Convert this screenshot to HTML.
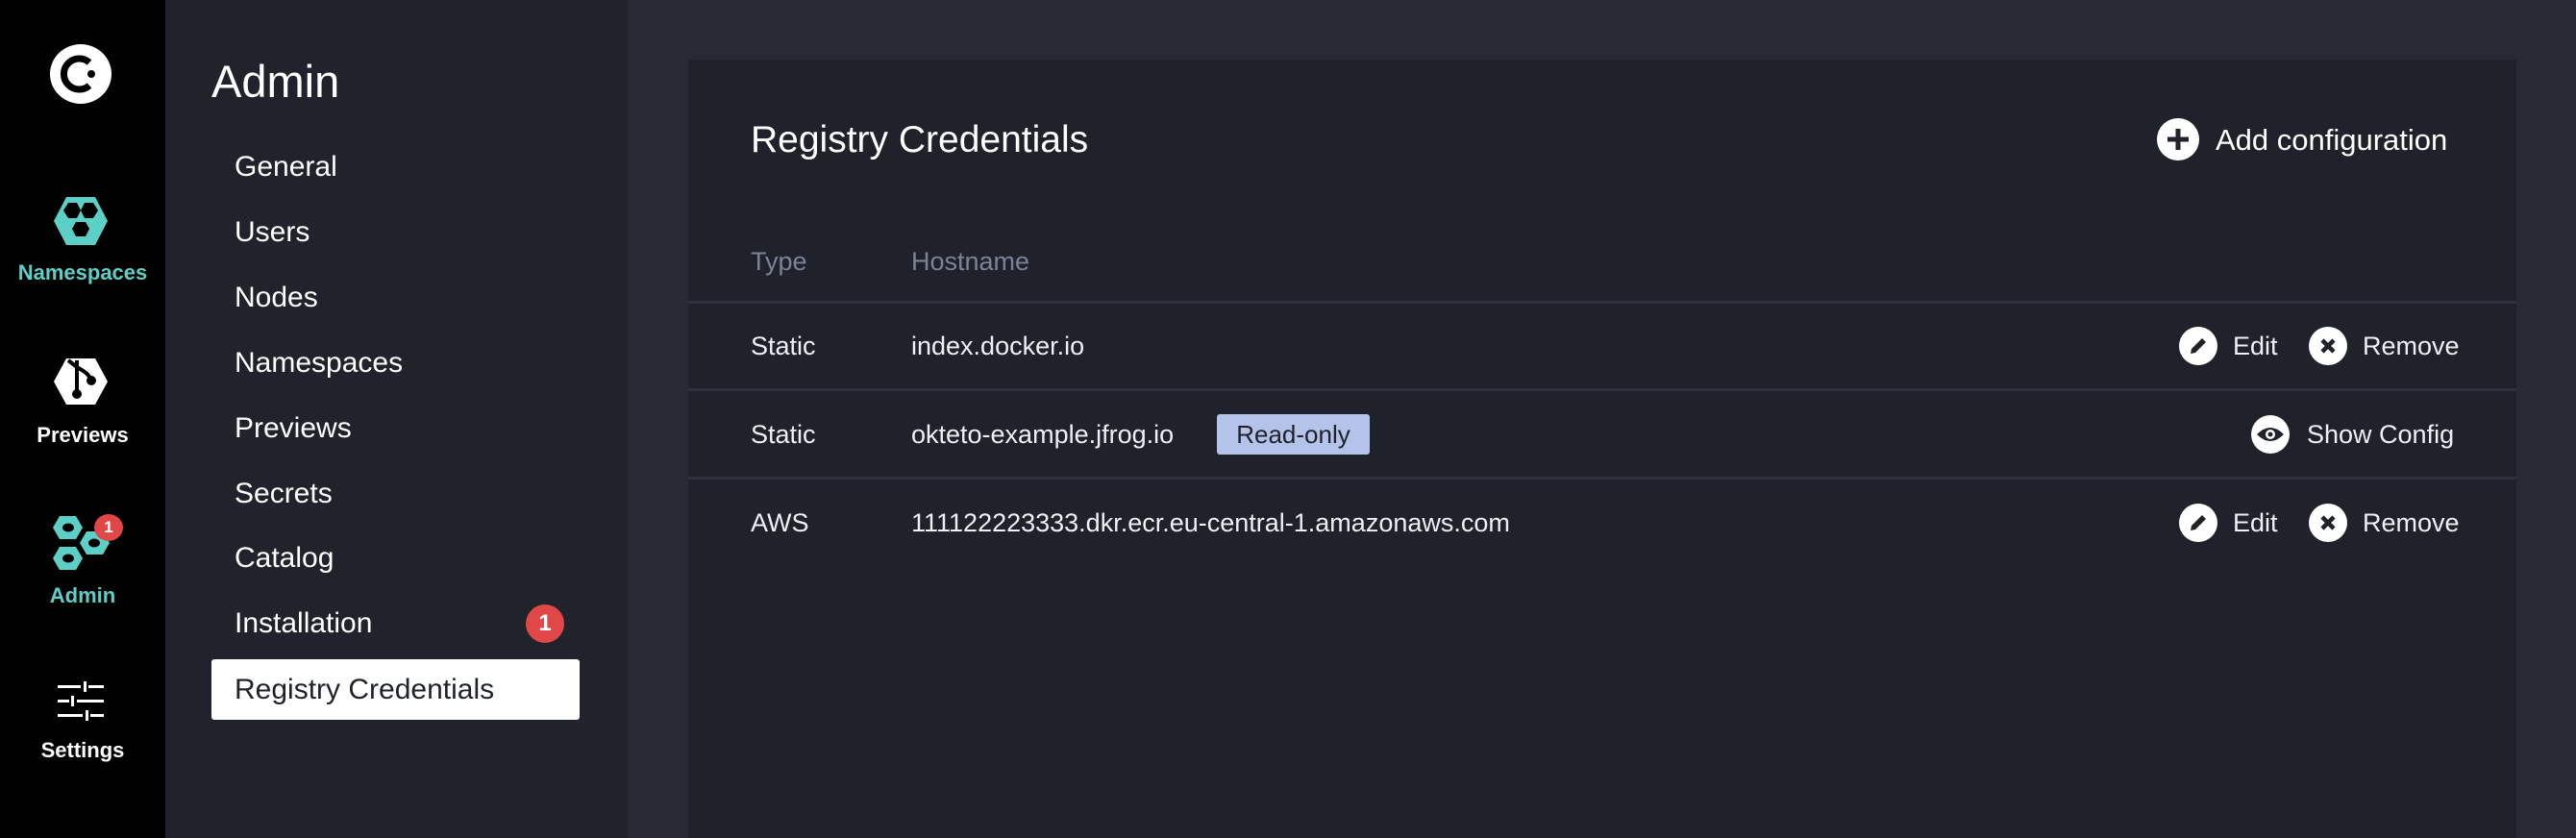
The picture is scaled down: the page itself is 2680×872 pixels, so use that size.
<!DOCTYPE html>
<html style="overflow:hidden"><head><meta charset="utf-8"><style>
*{margin:0;padding:0;box-sizing:border-box}
html,body{width:2680px;height:872px;overflow:hidden}
body{background:#272934;font-family:"Liberation Sans",sans-serif;position:relative;color:#f2f2f4}
.abs{position:absolute}
#nav{left:0;top:0;width:172px;height:872px;background:#000}
#side{left:172px;top:0;width:481px;height:872px;background:#20222c}
.navl{position:absolute;left:0;width:172px;text-align:center;font-size:22px;font-weight:bold;color:#fff}
.mi{position:absolute;left:244px;font-size:30px;color:#fff;line-height:40px;transform:translateY(-20px)}
#card{left:716px;top:62px;width:1902px;height:810px;background:#1f212b}
.t{position:absolute;font-size:27px;line-height:36px;transform:translateY(-18px);color:#eef0f3}
.sep{position:absolute;left:716px;width:1902px;height:3px;background:#2f323d}
</style></head><body>
<div id="nav" class="abs"></div>
<div id="side" class="abs"></div>

<!-- logo -->
<svg class="abs" style="left:51px;top:45px" width="66" height="64" viewBox="0 0 66 64">
<ellipse cx="33" cy="32" rx="32" ry="31" fill="#fff"/>
<path d="M42 20 A16 16 0 1 0 42 44" fill="none" stroke="#000" stroke-width="7"/>
<circle cx="44" cy="32" r="4" fill="#000"/>
</svg>
<!-- namespaces -->
<svg class="abs" style="left:56px;top:204px" width="56" height="52" viewBox="0 0 56 52">
<polygon points="13,1 43,1 56,26 43,51 13,51 0,26" fill="#5ccfc6"/>
<g fill="#000"><polygon points="10,15 15,7 24,7 28,15 24,23 15,23"/><polygon points="28,15 32,7 41,7 46,15 41,23 32,23"/><polygon points="19,34 23,27 33,27 37,34 33,42 23,42"/></g>
</svg>
<div class="navl" style="top:271px;color:#5ccfc6">Namespaces</div>
<!-- previews -->
<svg class="abs" style="left:56px;top:372px" width="56" height="50" viewBox="0 0 56 50">
<polygon points="13,1 43,1 56,25 43,49 13,49 0,25" fill="#fff"/>
<g stroke="#000" stroke-width="4" fill="none"><path d="M24,3 V38"/><path d="M15,3 L24,10 C31,14 36,17 38,22"/></g>
<circle cx="39" cy="24" r="5" fill="#000"/><circle cx="24" cy="38" r="5" fill="#000"/>
</svg>
<div class="navl" style="top:440px">Previews</div>
<!-- admin -->
<svg class="abs" style="left:55px;top:537px" width="60" height="58" viewBox="0 0 60 58">
<g fill="#5ccfc6"><polygon points="7,0 24,0 31,12 24,24 7,24 0,12"/><polygon points="35,16 52,16 59,28 52,40 35,40 28,28"/><polygon points="7,32 24,32 31,44 24,56 7,56 0,44"/></g>
<g fill="#000"><ellipse cx="16" cy="12" rx="6" ry="4.5"/><ellipse cx="43" cy="28" rx="6" ry="4.5"/><ellipse cx="16" cy="44" rx="6" ry="4.5"/></g>
</svg>
<div class="abs" style="left:98px;top:535px;width:30px;height:28px;border-radius:50%;background:#e04848;color:#fff;font-size:17px;font-weight:bold;text-align:center;line-height:28px">1</div>
<div class="navl" style="top:607px;color:#5ccfc6">Admin</div>
<!-- settings -->
<svg class="abs" style="left:60px;top:709px" width="48" height="42" viewBox="0 0 48 42">
<g fill="#fff"><rect x="0" y="4" width="24" height="3"/><rect x="32" y="4" width="16" height="3"/><rect x="27" y="0" width="3" height="11"/>
<rect x="0" y="19" width="12" height="3"/><rect x="20" y="19" width="28" height="3"/><rect x="14" y="15" width="3" height="11"/>
<rect x="0" y="34" width="26" height="3"/><rect x="34" y="34" width="14" height="3"/><rect x="29" y="30" width="3" height="11"/></g>
</svg>
<div class="navl" style="top:768px">Settings</div>

<!-- side menu -->
<div class="abs" style="left:220px;top:57px;font-size:47px;color:#fff;line-height:56px">Admin</div>
<div class="mi" style="top:174px">General</div>
<div class="mi" style="top:242px">Users</div>
<div class="mi" style="top:310px">Nodes</div>
<div class="mi" style="top:378px">Namespaces</div>
<div class="mi" style="top:446px">Previews</div>
<div class="mi" style="top:514px">Secrets</div>
<div class="mi" style="top:581px">Catalog</div>
<div class="mi" style="top:649px">Installation</div>
<div class="abs" style="left:547px;top:629px;width:40px;height:40px;border-radius:50%;background:#e04848;color:#fff;font-size:24px;font-weight:bold;text-align:center;line-height:40px">1</div>
<div class="abs" style="left:220px;top:686px;width:383px;height:63px;background:#fff;border-radius:3px"></div>
<div class="mi" style="top:718px;color:#1f212b">Registry Credentials</div>

<!-- card -->
<div id="card" class="abs"></div>
<div class="t" style="left:781px;top:146px;font-size:39px;line-height:50px;transform:translateY(-25px);color:#fff">Registry Credentials</div>
<svg class="abs" style="left:2244px;top:123px" width="44" height="44" viewBox="0 0 44 44"><circle cx="22" cy="22" r="22" fill="#fff"/><path d="M22 11V33M11 22H33" stroke="#1f212b" stroke-width="5"/></svg>
<div class="t" style="left:2305px;top:146px;font-size:31px;color:#fff">Add configuration</div>

<div class="t" style="left:781px;top:272px;color:#7d8397">Type</div>
<div class="t" style="left:948px;top:272px;color:#7d8397">Hostname</div>
<div class="sep" style="top:313px"></div>
<div class="sep" style="top:404px"></div>
<div class="sep" style="top:496px"></div>

<div class="t" style="left:781px;top:360px">Static</div>
<div class="t" style="left:948px;top:360px">index.docker.io</div>
<div class="t" style="left:781px;top:452px">Static</div>
<div class="t" style="left:948px;top:452px">okteto-example.jfrog.io</div>
<div class="abs" style="left:1266px;top:431px;width:159px;height:42px;background:#b4c3ea;border-radius:3px;color:#1f212b;font-size:26px;line-height:42px;text-align:center">Read-only</div>
<div class="t" style="left:781px;top:544px">AWS</div>
<div class="t" style="left:948px;top:544px">111122223333.dkr.ecr.eu-central-1.amazonaws.com</div>

<!-- actions -->
<svg class="abs" style="left:2267px;top:340px" width="40" height="40" viewBox="0 0 40 40"><circle cx="20" cy="20" r="20" fill="#fff"/><path d="M12 28 L13 23 L24 12 L28 16 L17 27 Z" fill="#1f212b"/></svg>
<div class="t" style="left:2323px;top:360px">Edit</div>
<svg class="abs" style="left:2402px;top:340px" width="40" height="40" viewBox="0 0 40 40"><circle cx="20" cy="20" r="20" fill="#fff"/><path d="M14 14L26 26M26 14L14 26" stroke="#1f212b" stroke-width="4.5"/></svg>
<div class="t" style="left:2458px;top:360px">Remove</div>

<svg class="abs" style="left:2342px;top:432px" width="40" height="40" viewBox="0 0 40 40"><circle cx="20" cy="20" r="20" fill="#fff"/><path d="M6 20 Q20 6 34 20 Q20 34 6 20Z" fill="#1f212b"/><circle cx="20" cy="20" r="5" fill="#fff"/><circle cx="20" cy="20" r="2.5" fill="#1f212b"/></svg>
<div class="t" style="left:2400px;top:452px">Show Config</div>

<svg class="abs" style="left:2267px;top:524px" width="40" height="40" viewBox="0 0 40 40"><circle cx="20" cy="20" r="20" fill="#fff"/><path d="M12 28 L13 23 L24 12 L28 16 L17 27 Z" fill="#1f212b"/></svg>
<div class="t" style="left:2323px;top:544px">Edit</div>
<svg class="abs" style="left:2402px;top:524px" width="40" height="40" viewBox="0 0 40 40"><circle cx="20" cy="20" r="20" fill="#fff"/><path d="M14 14L26 26M26 14L14 26" stroke="#1f212b" stroke-width="4.5"/></svg>
<div class="t" style="left:2458px;top:544px">Remove</div>
</body></html>
